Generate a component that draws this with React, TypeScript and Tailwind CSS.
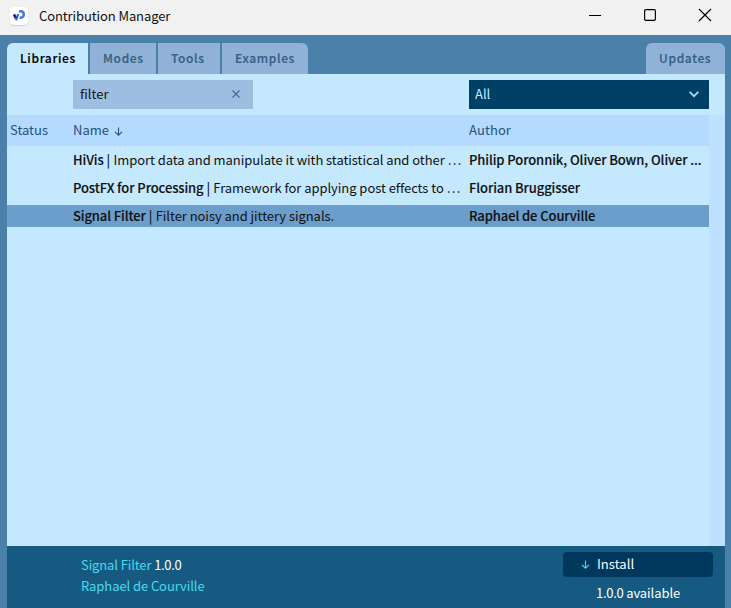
import type { ReactNode } from 'react';

const tabs = [
  { name: 'Modes', cls: 'w-[66px]' },
  { name: 'Tools', cls: 'w-[62px]' },
  { name: 'Examples', cls: 'w-[86px] rounded-tr-[6px]' },
];

const rows = [
  { name: 'HiVis', text: 'Import data and manipulate it with statistical and other …', author: 'Philip Poronnik, Oliver Bown, Oliver ...' },
  { name: 'PostFX for Processing', text: 'Framework for applying post effects to …', author: 'Florian Bruggisser' },
  { name: 'Signal Filter', text: 'Filter noisy and jittery signals.', author: 'Raphael de Courville', selected: true },
];

function DownArrow({ className }: { className: string }) {
  return (
    <svg width="9" height="9" viewBox="0 0 9 9" fill="none" stroke="currentColor" strokeWidth="1.1" className={className}>
      <path d="M4.5 0.5V8M1 4.8L4.5 8.2L8 4.8" />
    </svg>
  );
}

function Tab({ children, className }: { children: ReactNode; className: string }) {
  return (
    <div className={`h-[31px] pl-[13px] text-[12px] font-medium leading-[30px] tracking-[0.65px] [-webkit-text-stroke:0.15px_currentColor] ${className}`}>{children}</div>
  );
}

export default function App() {
  return (
    <div className="flex h-[608px] w-[731px] flex-col overflow-hidden whitespace-nowrap bg-[#4a80aa] font-['Noto_Sans_CJK_SC',sans-serif] text-[13px] text-[#111]">
      <header className="flex h-[35px] shrink-0 items-center bg-[#f1f1f1] pl-[10px]">
        <div className="mb-[3px] flex size-[18px] items-center justify-center rounded-[4px] bg-white shadow-[0_1px_1px_#d0d0d0]">
          <svg width="18" height="18" viewBox="0 0 18 18" fill="none">
            <path d="M9.2 5C11.4 3.4 14 4.9 13.8 7.6C13.6 10 11.4 11.2 9.6 10.4" stroke="#3b76ee" strokeWidth="2.5" />
            <path d="M8.2 7L6 13.4" stroke="#4166d4" strokeWidth="2.2" />
            <path d="M4 7.4L5.8 11.2" stroke="#15248b" strokeWidth="2.6" />
          </svg>
        </div>
        <h1 className="mb-[4px] ml-[11px] tracking-[-0.1px]">Contribution Manager</h1>
        <svg className="mb-[5px] ml-auto mr-[18px]" width="124" height="14" viewBox="0 0 124 14" fill="none" stroke="#000" strokeWidth="1.2">
          <path d="M0 7.5H12" strokeWidth="1" />
          <rect x="55.6" y="1.6" width="10.8" height="10.8" rx="1.4" />
          <path d="M110 1L122 13M122 1L110 13" />
        </svg>
      </header>

      <div className="mx-[7px] mt-2 flex h-[31px] shrink-0 gap-[2px] text-[#355f83]">
        <Tab className="w-[81px] rounded-tl-[6px] bg-[#c4e9ff] text-black">Libraries</Tab>
        {tabs.map((t) => (
          <Tab key={t.name} className={`bg-[#8fb2d6] ${t.cls}`}>{t.name}</Tab>
        ))}
        <Tab className="ml-auto mr-[-1px] w-[79px] rounded-t-[6px] bg-[#8fb2d6]">Updates</Tab>
      </div>

      <main className="ml-[7px] mr-[6px] flex min-h-0 flex-1 flex-col bg-[#c4e9ff]">
        <div className="flex h-[41px] shrink-0 justify-between pb-[6px] pl-[66px] pr-4 pt-[6px]">
          <div className="flex w-[180px] items-center justify-between bg-[#9dbee0] pl-[7px] pr-[13px]">
            <span className="pb-[2px]">filter</span>
            <svg className="mb-[2px]" width="8" height="8" viewBox="0 0 8 8" stroke="#426c91" strokeWidth="1.2"><path d="M0.5 0.5L7.5 7.5M7.5 0.5L0.5 7.5" /></svg>
          </div>
          <div className="flex w-[240px] items-center justify-between bg-[#004066] pl-[6px] pr-[10px] text-[#c4e9ff]">
            <span className="pb-[2px]">All</span>
            <svg width="10" height="7" viewBox="0 0 10 7" fill="none" stroke="#a4dcff" strokeWidth="1.8"><path d="M0.7 0.8L5 5.2L9.3 0.8" /></svg>
          </div>
        </div>

        <div className="flex min-h-0 flex-1">
          <div className="w-[702px]">
            <div className="flex h-[31px] items-center bg-[#b5daff] pb-[2px] pl-[3px] text-[#24517e]">
              <span className="w-[63px]">Status</span>
              <span className="flex w-[396px] items-center">Name<DownArrow className="ml-[5px] mt-[3px]" /></span>
              <span className="tracking-[0.1px]">Author</span>
            </div>
            <div className="flex flex-col gap-[6px] pt-[3px]">
              {rows.map((r) => (
                <div key={r.name} className={`flex h-[22px] pl-[66px] leading-[22px] tracking-[-0.05px] ${r.selected ? 'bg-[#6b9ecb]' : ''}`}>
                  <span className="w-[396px] shrink-0"><span className="font-medium tracking-[-0.1px] [-webkit-text-stroke:0.12px_currentColor]">{r.name}</span><span className="mr-[0.5px] font-medium"> |</span> {r.text}</span>
                  <span className="font-medium tracking-[-0.1px] [-webkit-text-stroke:0.12px_currentColor]">{r.author}</span>
                </div>
              ))}
            </div>
          </div>
          <div className="flex-1 bg-[#bde1ff]" />
        </div>

        <footer className="flex h-[62px] shrink-0 justify-between bg-[#165a82] pl-[74px] pr-3 tracking-[-0.08px] text-white">
          <div className="pt-[8px] leading-[21px] text-[#45dced]">
            <p><span className="tracking-[-0.12px]">Signal Filter </span><span className="tracking-[-0.3px] text-white">1.0.0</span></p>
            <p>Raphael de Courville</p>
          </div>
          <div className="w-[150px] pt-[6px]">
            <button className="flex h-[25px] w-full items-center rounded-[4px] bg-[#00375c] pl-[18px]">
              <DownArrow className="mr-[7px] text-[#45dced]" />
              <span className="pb-[2px] tracking-[0.05px]">Install</span>
            </button>
            <p className="mt-[5px] pl-[33px] leading-[21px]"><span className="tracking-[-0.3px]">1.0.0</span> available</p>
          </div>
        </footer>
      </main>
    </div>
  );
}
